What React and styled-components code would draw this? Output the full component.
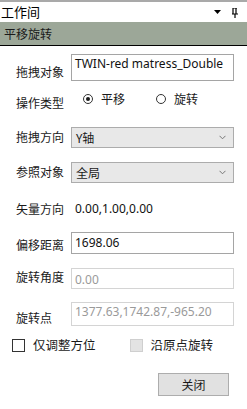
import React from 'react';
import styled, { createGlobalStyle } from 'styled-components';

const GlobalStyle = createGlobalStyle`
  html, body { margin: 0; padding: 0; background: #fff; }
  body {
    font-family: "Noto Sans", "Noto Sans CJK SC", sans-serif;
    color: #000;
  }
`;

const cjk = `"Noto Sans CJK SC", "Noto Sans", sans-serif`;
const latin = `"Noto Sans", "Noto Sans CJK SC", sans-serif`;

const Panel = styled.div`
  width: 247px;
  height: 409px;
  background: #fff;
  border-top: 2px solid #a9a9a9;
  box-sizing: border-box;
`;

const TitleBar = styled.div`
  height: 20px;
  display: flex;
  align-items: center;
  justify-content: space-between;
  padding: 0 9px 0 1px;
  font-family: ${cjk};
  font-size: 13px;
  line-height: 16px;
`;

const TitleIcons = styled.div`
  display: flex;
  align-items: center;
  gap: 11px;
  padding-top: 1px;
`;

const Header = styled.div`
  height: 23px;
  background: #9ca798;
  border-bottom: 1px solid #000;
  display: flex;
  align-items: center;
  padding-left: 4px;
  font-family: ${cjk};
  font-size: 12px;
  color: #1a1a1a;
`;

const Form = styled.div`
  display: flex;
  flex-direction: column;
`;

const Row = styled.div`
  display: grid;
  grid-template-columns: 55px 163px;
  padding-left: 16px;
  margin-top: ${p => p.$top}px;
  height: ${p => p.$h}px;
`;

const Label = styled.div`
  font-family: ${cjk};
  font-size: 12px;
  line-height: 16px;
  margin-top: ${p => p.$off || 0}px;
  white-space: nowrap;
  color: #1a1a1a;
`;

const TextBox = styled.div`
  box-sizing: border-box;
  height: 100%;
  border: 1px solid ${p => (p.$disabled ? '#d4d4d4' : '#a5a5a5')};
  color: ${p => (p.$disabled ? '#9a9a9a' : '#111')};
  font-family: ${latin};
  font-size: 12px;
  line-height: 16px;
  padding: ${p => p.$pad || 2}px 3px 0 3px;
  white-space: nowrap;
  overflow: hidden;
`;

const Select = styled.div`
  box-sizing: border-box;
  height: 100%;
  border: 1px solid #acacac;
  background: #e8e8e8;
  display: flex;
  align-items: center;
  justify-content: space-between;
  padding: 0 7px 0 4px;
  font-family: ${cjk};
  font-size: 12px;
  color: #1a1a1a;
`;

const RadioGroup = styled.div`
  display: flex;
  align-items: flex-start;
  padding-left: 12px;
  gap: 31px;
`;

const RadioItem = styled.label`
  display: flex;
  align-items: center;
  gap: 8px;
  font-family: ${cjk};
  font-size: 12px;
  line-height: 16px;
  color: #1a1a1a;
`;

const RadioCircle = styled.span`
  box-sizing: border-box;
  width: 10px;
  height: 10px;
  border-radius: 50%;
  border: 1px solid #333;
  display: flex;
  align-items: center;
  justify-content: center;
  &::after {
    content: '';
    width: 4px;
    height: 4px;
    border-radius: 50%;
    background: ${p => (p.$checked ? '#1a1a1a' : 'transparent')};
  }
`;

const Value = styled.div`
  font-family: ${latin};
  font-size: 12px;
  line-height: 16px;
  padding-left: 4px;
  color: #111;
`;

const CheckRow = styled.div`
  display: flex;
  align-items: center;
  padding-left: 12px;
  margin-top: 13px;
  height: 16px;
`;

const CheckItem = styled.label`
  display: flex;
  align-items: center;
  gap: 8px;
  width: 121px;
  font-family: ${cjk};
  font-size: 12.5px;
  line-height: 16px;
  color: #1a1a1a;
`;

const CheckBox = styled.span`
  box-sizing: border-box;
  width: 13px;
  height: 13px;
  border: 1px solid ${p => (p.$disabled ? '#cfcfcf' : '#333')};
  background: ${p => (p.$disabled ? '#e3e3e3' : '#fff')};
`;

const ButtonRow = styled.div`
  display: flex;
  justify-content: flex-end;
  padding-right: 18px;
  margin-top: 20px;
`;

const Button = styled.button`
  width: 71px;
  height: 23px;
  box-sizing: border-box;
  border: 1px solid #adadad;
  background: #e1e1e1;
  font-family: ${cjk};
  font-size: 12px;
  color: #1a1a1a;
  padding: 0;
`;

const Chevron = () => (
  <svg width="7" height="5" viewBox="0 0 7 5">
    <path d="M0.5 0.8 L3.5 3.8 L6.5 0.8" fill="none" stroke="#777" strokeWidth="1" />
  </svg>
);

const App = () => {
  return (
    <>
      <GlobalStyle />
      <Panel>
        <TitleBar>
          <span>工作间</span>
          <TitleIcons>
            <svg width="7" height="5" viewBox="0 0 7 5">
              <path d="M0 0 H7 L3.5 4 Z" fill="#000" />
            </svg>
            <svg width="6" height="10" viewBox="0 0 6 10">
              <path d="M1 0 H5 M1 0 V6 M4 0 V6 M0 6 H6 M3 6 V10" fill="none" stroke="#000" strokeWidth="1.2" />
            </svg>
          </TitleIcons>
        </TitleBar>
        <Header>平移旋转</Header>
        <Form>
          <Row $top={8} $h={27}>
            <Label $off={10}>拖拽对象</Label>
            <TextBox $pad={1}>TWIN-red matress_Double</TextBox>
          </Row>
          <Row $top={10} $h={18}>
            <Label $off={4}>操作类型</Label>
            <RadioGroup>
              <RadioItem><RadioCircle $checked />平移</RadioItem>
              <RadioItem><RadioCircle />旋转</RadioItem>
            </RadioGroup>
          </Row>
          <Row $top={18} $h={21}>
            <Label $off={2}>拖拽方向</Label>
            <Select><span>Y轴</span><Chevron /></Select>
          </Row>
          <Row $top={14} $h={21}>
            <Label $off={2}>参照对象</Label>
            <Select><span>全局</span><Chevron /></Select>
          </Row>
          <Row $top={18} $h={16}>
            <Label>矢量方向</Label>
            <Value>0.00,1.00,0.00</Value>
          </Row>
          <Row $top={15} $h={22}>
            <Label $off={5}>偏移距离</Label>
            <TextBox $pad={2}>1698.06</TextBox>
          </Row>
          <Row $top={14} $h={21}>
            <Label $off={1}>旋转角度</Label>
            <TextBox $disabled $pad={3}>0.00</TextBox>
          </Row>
          <Row $top={13} $h={22}>
            <Label $off={8}>旋转点</Label>
            <TextBox $disabled $pad={1}>1377.63,1742.87,-965.20</TextBox>
          </Row>
          <CheckRow>
            <CheckItem><CheckBox />仅调整方位</CheckItem>
            <CheckItem><CheckBox $disabled />沿原点旋转</CheckItem>
          </CheckRow>
          <ButtonRow>
            <Button>关闭</Button>
          </ButtonRow>
        </Form>
      </Panel>
    </>
  );
};

export default App;
